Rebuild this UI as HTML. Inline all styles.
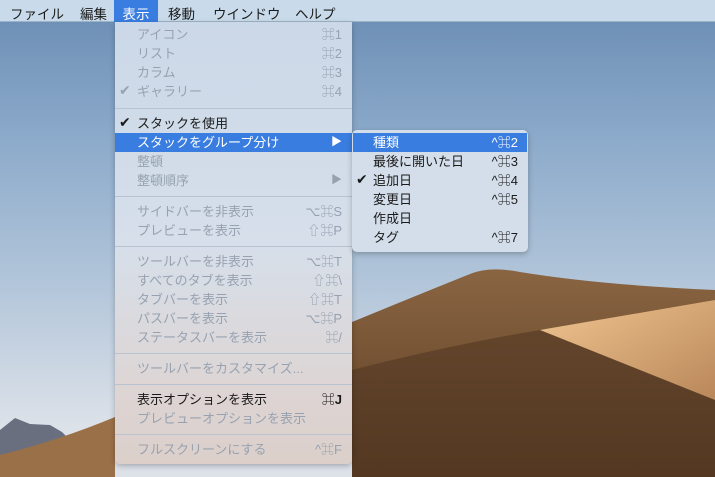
<!DOCTYPE html>
<html><head><meta charset="utf-8"><style>
*{margin:0;padding:0;box-sizing:border-box}
body{width:715px;height:477px;overflow:hidden;position:relative;font-family:"Liberation Sans","Noto Sans CJK JP",sans-serif;font-size:13px;background:#9fb6d0}
svg.bg{position:absolute;left:0;top:0}
.bar{position:absolute;left:0;top:0;width:715px;height:22px;background:#c9dbea;border-bottom:1px solid #9fb3c8}
.bar span{position:absolute;top:3px;color:#1b1b1b;font-size:13.5px}
.bar .sel{background:#3a7de0;color:#fff;top:0;height:22px;padding-top:3px;left:114px;width:44px;text-align:center}
.menu{position:absolute;left:115px;top:22px;width:237px;height:442px;background:linear-gradient(#cbd8e8 0%,#d6dfea 50%,#ddd6d6 80%,#dccfca 100%);border-radius:0 0 5px 5px;box-shadow:0 2px 6px rgba(0,0,0,.25)}
.sub{position:absolute;left:352px;top:130px;width:176px;height:122px;background:#d3deea;border-radius:5px;box-shadow:0 2px 6px rgba(0,0,0,.25)}
.r{position:absolute;height:19px;line-height:19px;left:0;right:0}
.r .t{position:absolute;left:22px}
.r .k{position:absolute;right:10px}
.r .c{position:absolute;left:4px;font-size:14px;font-family:"DejaVu Sans",sans-serif}
.d{color:#97a2b1}
.e{color:#1a1a1a}
.h{background:#3a7de0;color:#fff}
.sep{position:absolute;left:0;right:0;height:1px;background:#b9c3cf}
.sub .r .t{left:21px}
</style></head><body>
<svg class="bg" width="715" height="477" viewBox="0 0 715 477">
<defs>
<linearGradient id="sky" x1="0" y1="0" x2="0" y2="1">
<stop offset="0" stop-color="#6a8cb3"/><stop offset="0.3" stop-color="#8dabcb"/><stop offset="0.6" stop-color="#b3c6da"/><stop offset="0.9" stop-color="#dde2e9"/></linearGradient>
<linearGradient id="d1" x1="0" y1="0" x2="0" y2="1"><stop offset="0" stop-color="#8a6542"/><stop offset="1" stop-color="#5a3c22"/></linearGradient>
<linearGradient id="d2" x1="0" y1="0" x2="1" y2="1"><stop offset="0" stop-color="#f0c590"/><stop offset="1" stop-color="#b9875a"/></linearGradient>
</defs>
<rect width="715" height="477" fill="url(#sky)"/>
<path d="M0,430 L15,418 L30,424 L50,425 L62,432 L70,440 L0,460Z" fill="#6a6f80"/>
<path d="M0,455 Q60,440 115,417 L115,477 L0,477Z" fill="#9a7048"/>
<path d="M352,322 Q430,290 470,274 Q490,266 520,272 Q600,285 715,290 L715,477 L352,477Z" fill="url(#d1)"/>
<path d="M352,370 Q450,345 540,330 Q600,330 715,300 L715,477 L352,477Z" fill="#4f3420" opacity=".55"/>
<path d="M540,330 Q610,318 715,300 L715,400 Q640,370 540,330Z" fill="url(#d2)"/>
</svg>
<div class="bar">
<span style="left:10px">ファイル</span><span style="left:80px">編集</span><span class="sel">表示</span><span style="left:168px">移動</span><span style="left:213px">ウインドウ</span><span style="left:295px">ヘルプ</span>
</div>
<div class="menu">
<div class="r d" style="top:3px"><span class="t">アイコン</span><span class="k">⌘1</span></div>
<div class="r d" style="top:22px"><span class="t">リスト</span><span class="k">⌘2</span></div>
<div class="r d" style="top:41px"><span class="t">カラム</span><span class="k">⌘3</span></div>
<div class="r d" style="top:60px"><span class="c">✔</span><span class="t">ギャラリー</span><span class="k">⌘4</span></div>
<div class="sep" style="top:86px"></div>
<div class="r e" style="top:92px"><span class="c">✔</span><span class="t">スタックを使用</span></div>
<div class="r h" style="top:111px"><span class="t">スタックをグループ分け</span><span class="k" style="font-size:11px">▶</span></div>
<div class="r d" style="top:130px"><span class="t">整頓</span></div>
<div class="r d" style="top:149px"><span class="t">整頓順序</span><span class="k" style="font-size:11px">▶</span></div>
<div class="sep" style="top:174px"></div>
<div class="r d" style="top:180px"><span class="t">サイドバーを非表示</span><span class="k">⌥⌘S</span></div>
<div class="r d" style="top:199px"><span class="t">プレビューを表示</span><span class="k">⇧⌘P</span></div>
<div class="sep" style="top:224px"></div>
<div class="r d" style="top:230px"><span class="t">ツールバーを非表示</span><span class="k">⌥⌘T</span></div>
<div class="r d" style="top:249px"><span class="t">すべてのタブを表示</span><span class="k">⇧⌘\</span></div>
<div class="r d" style="top:268px"><span class="t">タブバーを表示</span><span class="k">⇧⌘T</span></div>
<div class="r d" style="top:287px"><span class="t">パスバーを表示</span><span class="k">⌥⌘P</span></div>
<div class="r d" style="top:306px"><span class="t">ステータスバーを表示</span><span class="k">⌘/</span></div>
<div class="sep" style="top:331px"></div>
<div class="r d" style="top:337px"><span class="t">ツールバーをカスタマイズ...</span></div>
<div class="sep" style="top:362px"></div>
<div class="r e" style="top:368px"><span class="t">表示オプションを表示</span><span class="k" style="font-weight:bold">⌘J</span></div>
<div class="r d" style="top:387px"><span class="t">プレビューオプションを表示</span></div>
<div class="sep" style="top:412px"></div>
<div class="r d" style="top:418px"><span class="t">フルスクリーンにする</span><span class="k">^⌘F</span></div>
</div>
<div class="sub">
<div class="r h" style="top:3px;left:1px;right:1px"><span class="t" style="left:20px">種類</span><span class="k" style="right:9px">^⌘2</span></div>
<div class="r e" style="top:22px"><span class="t">最後に開いた日</span><span class="k">^⌘3</span></div>
<div class="r e" style="top:41px"><span class="c">✔</span><span class="t">追加日</span><span class="k">^⌘4</span></div>
<div class="r e" style="top:60px"><span class="t">変更日</span><span class="k">^⌘5</span></div>
<div class="r e" style="top:79px"><span class="t">作成日</span></div>
<div class="r e" style="top:98px"><span class="t">タグ</span><span class="k">^⌘7</span></div>
</div>
</body></html>
